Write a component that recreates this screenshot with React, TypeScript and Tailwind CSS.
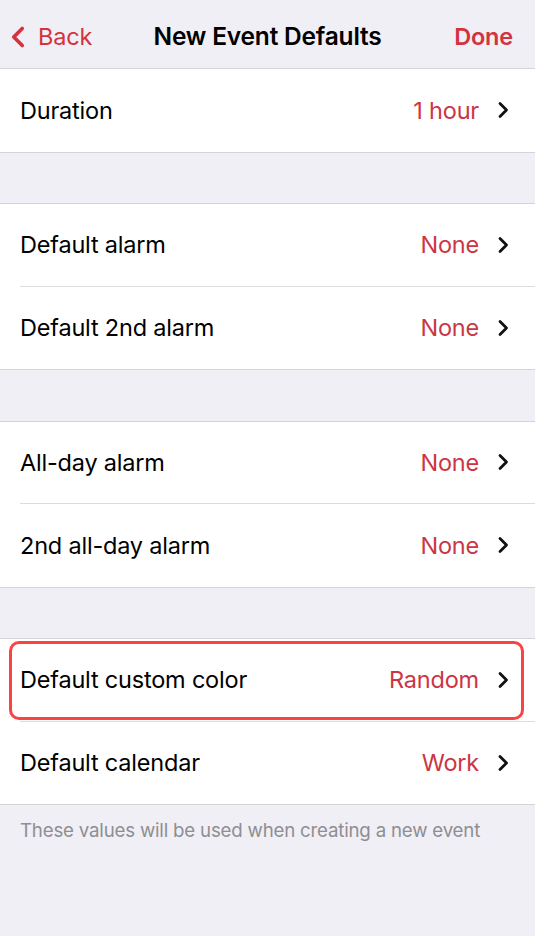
import { ChevronLeft } from 'lucide-react'

type Row = { label: string; value: string; highlight?: boolean }

const sections: Row[][] = [
  [{ label: 'Duration', value: '1 hour' }],
  [
    { label: 'Default alarm', value: 'None' },
    { label: 'Default 2nd alarm', value: 'None' },
  ],
  [
    { label: 'All-day alarm', value: 'None' },
    { label: '2nd all-day alarm', value: 'None' },
  ],
  [
    { label: 'Default custom color', value: 'Random', highlight: true },
    { label: 'Default calendar', value: 'Work' },
  ],
]

function Chevron() {
  return (
    <svg width="12" height="18" viewBox="0 0 12 18" className="shrink-0">
      <path d="M3 2.5 L9.5 9 L3 15.5" fill="none" stroke="#111" strokeWidth="2.8" strokeLinecap="round" strokeLinejoin="round" />
    </svg>
  )
}

function SettingsRow({ row, last }: { row: Row; last: boolean }) {
  return (
    <div className="relative bg-white pl-5">
      <div className={`flex h-[82.5px] items-center pr-[26px] ${last ? '' : 'border-b border-[#dcdce0]'}`}>
        <span className="flex-1 text-[23.5px] text-black">{row.label}</span>
        <span className="mr-[18px] text-[23.5px] text-[#cc3544]">{row.value}</span>
        <Chevron />
      </div>
      {row.highlight && (
        <div className="pointer-events-none absolute left-[9px] right-[11px] top-[2px] bottom-[2px] rounded-[10px] border-[3px] border-[#fb4343]" />
      )}
    </div>
  )
}

export default function App() {
  return (
    <div className="min-h-[936px] w-[535px] bg-[#f0eff5] font-['Inter','Noto_Sans',sans-serif] tracking-[-0.2px]">
      <header className="relative flex h-[68px] items-center justify-between pl-[1px] pr-[22px] pt-[5px]">
        <button className="flex items-center text-[#d4323f]">
          <ChevronLeft size={34} strokeWidth={2.6} />
          <span className="ml-[3px] text-[23.5px]">Back</span>
        </button>
        <h1 className="absolute left-1/2 top-[5px] flex h-[63px] -translate-x-1/2 items-center whitespace-nowrap text-[24.5px] font-semibold text-black">
          New Event Defaults
        </h1>
        <button className="text-[23.5px] font-semibold text-[#d4323f]">Done</button>
      </header>

      <div className="flex flex-col gap-[50.5px]">
        {sections.map((rows, i) => (
          <section key={i} className="border-y border-[#d3d3d8]">
            {rows.map((row, j) => (
              <SettingsRow key={row.label} row={row} last={j === rows.length - 1} />
            ))}
          </section>
        ))}
      </div>

      <p className="px-5 pt-[12px] text-[18.7px] text-[#8e8e93]">These values will be used when creating a new event</p>
    </div>
  )
}
